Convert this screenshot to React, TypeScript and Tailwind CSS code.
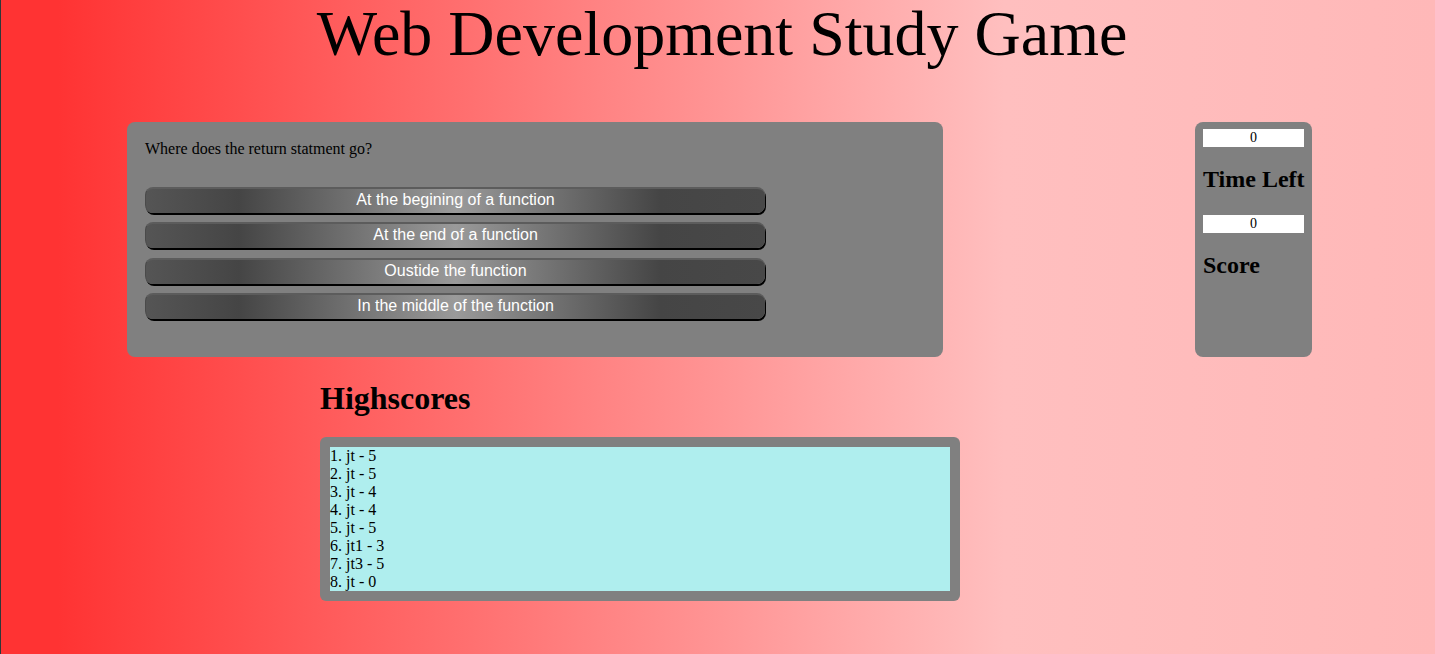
import React from 'react';

const answers = [
  'At the begining of a function',
  'At the end of a function',
  'Oustide the function',
  'In the middle of the function',
];

const scores = ['jt - 5', 'jt - 5', 'jt - 4', 'jt - 4', 'jt - 5', 'jt1 - 3', 'jt3 - 5', 'jt - 0'];

export default function App() {
  return (
    <div className="min-h-[654px] border-l border-[#2f3838] bg-[linear-gradient(to_right,#ff3333_4%,#ffbfbf_70%,#ffb8b8_100%)] font-['Liberation_Serif',serif] text-black">
      <h1 className="m-0 pl-[8px] text-center text-[64px] font-normal leading-[67px]">Web Development Study Game</h1>

      <div className="mt-[55px] flex pl-[126px] pr-[123px]">
        {/* question card */}
        <div className="w-[816px] h-[235px] rounded-lg bg-[#808080] px-[18px] pt-[18px]">
          <p className="text-[16px] leading-[18px]">Where does the return statment go?</p>
          <div className="mt-[29px] flex flex-col gap-[9.3px]">
            {answers.map(a => (
              <button
                key={a}
                className="h-[26px] w-[620px] rounded-lg border-t-2 border-l border-t-[#5c5c5c] border-l-[#4a4a4a] bg-[linear-gradient(to_right,#555_0%,#454545_15%,#9a9a9a_50%,#454545_83%,#484848_100%)] pb-[2px] font-['Liberation_Sans',Arial,sans-serif] text-[16px] leading-[18px] text-white shadow-[1px_2px_0_#000]"
              >
                {a}
              </button>
            ))}
          </div>
        </div>

        {/* timer / score */}
        <div className="ml-auto w-[117px] h-[235px] rounded-lg bg-[#808080] px-2 pt-[7px]">
          <div className="h-[18px] bg-white text-center text-[14px] leading-[18px]">0</div>
          <h3 className="mt-[19px] whitespace-nowrap text-[24px] font-bold leading-[27px]">Time Left</h3>
          <div className="mt-[22px] h-[18px] bg-white text-center text-[14px] leading-[18px]">0</div>
          <h3 className="mt-[19px] whitespace-nowrap text-[24px] font-bold leading-[27px]">Score</h3>
        </div>
      </div>

      <div className="ml-[319px] mt-[23px] w-[640px]">
        <h2 className="text-[32px] font-bold leading-[36px]">Highscores</h2>
        <div className="mt-[21px] rounded-md bg-[#808080] p-[10px]">
          <ol className="bg-[#afeeee] text-[16px] leading-[18px]">
            {scores.map((s, i) => (
              <li key={i}>
                {i + 1}. {s}
              </li>
            ))}
          </ol>
        </div>
      </div>
    </div>
  );
}
